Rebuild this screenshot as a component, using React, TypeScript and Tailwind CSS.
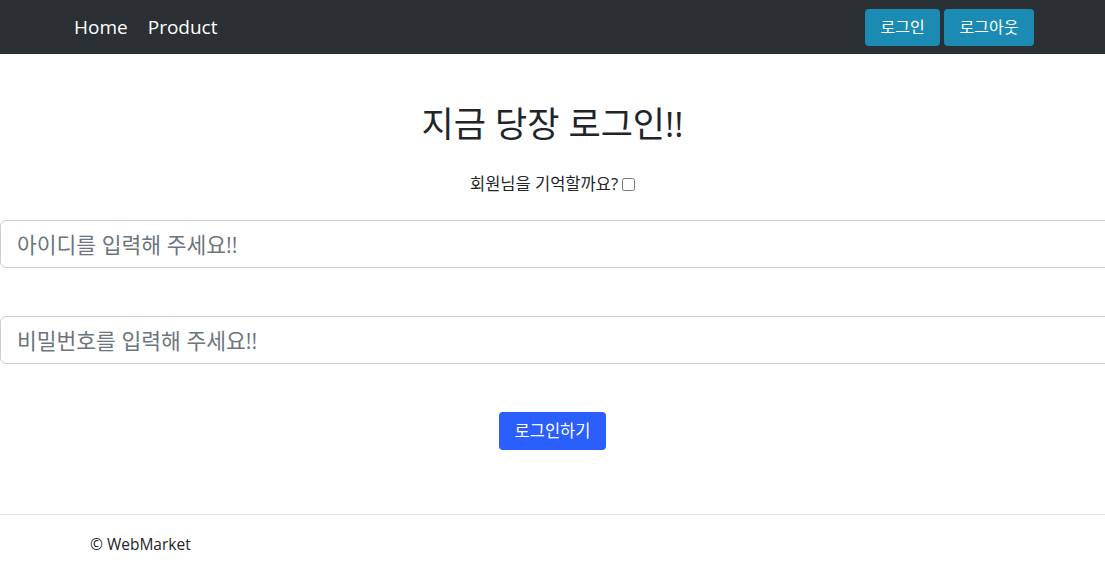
export default function App() {
  return (
    <div
      className="min-h-[566px] bg-white text-[#212529] overflow-x-hidden"
      style={{ fontFamily: '"Open Sans", "Noto Sans CJK KR", sans-serif' }}
    >
      {/* Navbar */}
      <nav className="h-[54px] bg-[#2b3035] flex items-center justify-between pl-[74px] pr-[71px]">
        <div className="flex items-center gap-[20px] text-[19px] text-white">
          <a href="#">Home</a>
          <a href="#">Product</a>
        </div>
        <div className="flex items-center gap-[4px]">
          <button className="h-[37px] px-[15.5px] rounded-[4px] bg-[#1b8bb3] text-white text-[16px]">
            로그인
          </button>
          <button className="h-[37px] px-[15.5px] rounded-[4px] bg-[#1b8bb3] text-white text-[16px]">
            로그아웃
          </button>
        </div>
      </nav>

      {/* Login */}
      <main className="flex flex-col items-center">
        <h1 className="mt-[46px] text-[35px] leading-[48px] text-[#212529]">지금 당장 로그인!!</h1>
        <label className="mt-[25px] flex items-center gap-[4px] text-[16.5px] leading-[22px]">
          회원님을 기억할까요?
          <input type="checkbox" className="w-[13px] h-[13px]" />
        </label>
        <div className="self-stretch mt-[25px] flex flex-col gap-[48px]">
          <input
            type="text"
            placeholder="아이디를 입력해 주세요!!"
            className="w-[calc(100%+20px)] h-[48px] px-[16px] border border-[#c5d0d8] rounded-[6px] text-[21.5px] placeholder:text-[#6c757d] outline-none"
          />
          <input
            type="password"
            placeholder="비밀번호를 입력해 주세요!!"
            className="w-[calc(100%+20px)] h-[48px] px-[16px] border border-[#c5d0d8] rounded-[6px] text-[21.5px] placeholder:text-[#6c757d] outline-none"
          />
        </div>
        <button className="mt-[48px] h-[38px] px-[15.5px] rounded-[4px] bg-[#2a5efd] text-white text-[16.5px]">
          로그인하기
        </button>
      </main>

      {/* Footer */}
      <footer className="mt-[64px] border-t border-[#dee2e6] pl-[90px] pt-[18px]">
        <p className="text-[15.5px] leading-[22px]">© WebMarket</p>
      </footer>
    </div>
  );
}
